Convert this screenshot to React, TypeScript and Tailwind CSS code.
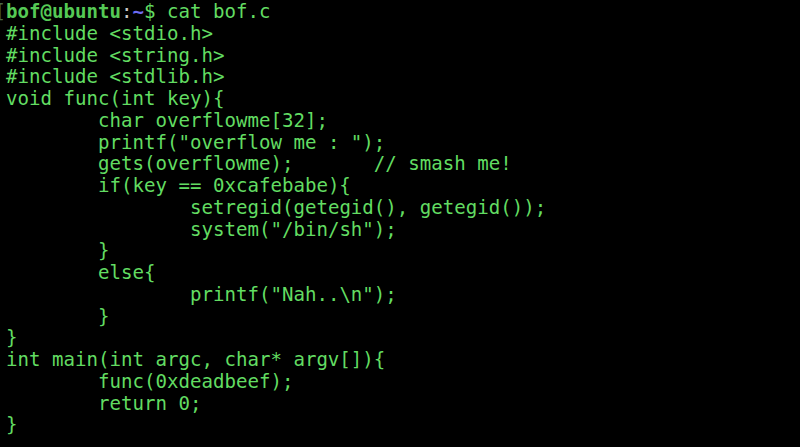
import React from "react";

const code = [
  "#include <stdio.h>",
  "#include <string.h>",
  "#include <stdlib.h>",
  "void func(int key){",
  "\t\tchar overflowme[32];",
  '\t\tprintf("overflow me : ");',
  "\t\tgets(overflowme);       // smash me!",
  "\t\tif(key == 0xcafebabe){",
  "\t\t\t\tsetregid(getegid(), getegid());",
  '\t\t\t\tsystem("/bin/sh");',
  "\t\t}",
  "\t\telse{",
  '\t\t\t\tprintf("Nah..\\n");',
  "\t\t}",
  "}",
  "int main(int argc, char* argv[]){",
  "\t\tfunc(0xdeadbeef);",
  "\t\treturn 0;",
  "}",
];

function App() {
  return (
    <div className="w-[800px] h-[447px] overflow-hidden bg-black pl-[6px] pt-[1px] font-['DejaVu_Sans_Mono',monospace] text-[19.1px] leading-[21.75px] text-[#62dc62] whitespace-pre [tab-size:4]">
      <div>
        <span className="-ml-[11.5px] text-[#4a6a4a]">[</span>
        <span className="font-bold text-[#55c955]">bof@ubuntu</span>
        <span className="text-[#c8c8c8]">:</span>
        <span className="font-bold text-[#6f6cf2]">~</span>
        <span className="text-[#62dc62]">$ cat bof.c</span>
      </div>
      {code.map((line, i) => (
        <div key={i}>{line}</div>
      ))}
    </div>
  );
}

export default App;
